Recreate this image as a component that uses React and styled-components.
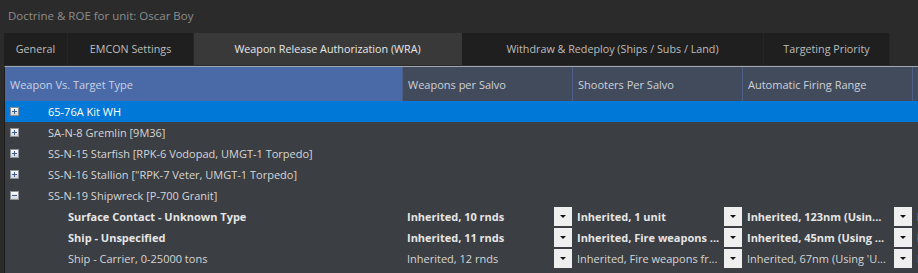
import React from 'react';
import styled, { createGlobalStyle } from 'styled-components';

const GlobalStyle = createGlobalStyle`
  body {
    margin: 0;
    background: #2b2b2b;
    font-family: "Open Sans", "Noto Sans", sans-serif;
    overflow: hidden;
  }
`;

const Window = styled.div`
  width: 918px;
  height: 273px;
  overflow: hidden;
  background: #2b2b2b;
`;

const TitleBar = styled.div`
  height: 33px;
  padding-left: 8px;
  line-height: 32px;
  font-size: 11.5px;
  color: #8d8d8d;
`;

const TabBar = styled.div`
  display: flex;
  height: 32px;
  margin-left: 4px;
`;

const Tab = styled.div`
  width: ${props => props.width}px;
  display: flex;
  align-items: center;
  justify-content: center;
  font-size: 10.75px;
  background: ${props => props.active ? '#393939' : '#1f1f1f'};
  color: ${props => props.active ? '#e8e8e8' : '#bdbdbd'};
  border-right: 1px solid ${props => props.active ? '#393939' : '#262626'};
  box-sizing: border-box;
`;

const Grid = styled.div`
  margin: 1px 0 0 4px;
  border-top: 1px solid #a3a8b0;
  border-left: 1px solid #1c1c1c;
  background: #3b3e43;
  height: 220px;
`;

const HeaderRow = styled.div`
  display: flex;
  height: 34px;
`;

const HeaderCell = styled.div`
  flex: 0 0 ${props => props.width}px;
  display: flex;
  align-items: center;
  padding-left: 5px;
  box-sizing: border-box;
  font-size: 11px;
  white-space: nowrap;
  overflow: hidden;
  color: ${props => props.sorted ? '#c9d2e4' : '#cdd2da'};
  background: ${props => props.sorted ? '#4a6aa7' : '#424b5c'};
  border-left: ${props => props.sorted ? 'none' : '1px solid #4d5f88'};
`;

const Row = styled.div`
  display: flex;
  height: 21px;
  align-items: center;
  background: ${props => props.selected ? '#0078d7' : 'transparent'};
`;

const NameCell = styled.div`
  flex: 0 0 397px;
  display: flex;
  align-items: center;
  height: 100%;
  font-size: 11px;
  font-weight: ${props => props.bold ? 700 : 400};
  color: ${props => props.selected ? '#ffffff' : props.bold ? '#e6e6e6' : '#d6d6d6'};
  white-space: nowrap;
`;

const ExpandSlot = styled.div`
  width: ${props => props.indent}px;
  flex: 0 0 auto;
  display: flex;
  align-items: center;
  padding-left: 5px;
  box-sizing: border-box;
`;

const Expander = styled.div`
  width: 9px;
  height: 9px;
  box-sizing: border-box;
  border: 1px solid #8e9196;
  background: linear-gradient(#fafafa, #d4d6da);
  position: relative;

  &::before, &::after {
    content: '';
    position: absolute;
    background: #3d5c96;
  }
  &::before {
    left: 1px;
    right: 1px;
    top: 3px;
    height: 1px;
  }
  &::after {
    display: ${props => props.open ? 'none' : 'block'};
    top: 1px;
    bottom: 1px;
    left: 3px;
    width: 1px;
  }
`;

const ValueCell = styled.div`
  flex: 0 0 170px;
  display: flex;
  align-items: center;
  height: 100%;
  box-sizing: border-box;
  padding-left: 5px;
  font-size: 11px;
  font-weight: ${props => props.bold ? 700 : 400};
  color: ${props => props.bold ? '#e6e6e6' : '#d6d6d6'};
  white-space: nowrap;
  overflow: hidden;
`;

const ValueText = styled.span`
  flex: 1;
  overflow: hidden;
`;

const DropButton = styled.div`
  flex: 0 0 18px;
  height: 19px;
  background: #efefef;
  display: flex;
  align-items: center;
  justify-content: center;

  &::after {
    content: '';
    border-left: 3px solid transparent;
    border-right: 3px solid transparent;
    border-top: 3px solid #111;
  }
`;

const tabs = [
  { label: 'General', width: 64 },
  { label: 'EMCON Settings', width: 126 },
  { label: 'Weapon Release Authorization (WRA)', width: 268, active: true },
  { label: 'Withdraw & Redeploy (Ships / Subs / Land)', width: 302 },
  { label: 'Targeting Priority', width: 126 },
];

const weapons = [
  { name: '65-76A Kit WH', selected: true },
  { name: 'SA-N-8 Gremlin [9M36]' },
  { name: 'SS-N-15 Starfish [RPK-6 Vodopad, UMGT-1 Torpedo]' },
  { name: 'SS-N-16 Stallion ["RPK-7 Veter, UMGT-1 Torpedo]' },
  { name: 'SS-N-19 Shipwreck [P-700 Granit]', open: true },
];

const targets = [
  { name: 'Surface Contact - Unknown Type', bold: true,
    values: ['Inherited, 10 rnds', 'Inherited, 1 unit', 'Inherited, 123nm (Usin...', 'Inherited'] },
  { name: 'Ship - Unspecified', bold: true,
    values: ['Inherited, 11 rnds', 'Inherited, Fire weapons ...', 'Inherited, 45nm (Using ...', 'Inherited'] },
  { name: 'Ship - Carrier, 0-25000 tons',
    values: ['Inherited, 12 rnds', 'Inherited, Fire weapons fr...', "Inherited, 67nm (Using 'U...", 'Inherited'] },
];

export default function App() {
  return (
    <Window>
      <GlobalStyle />
      <TitleBar>Doctrine &amp; ROE for unit: Oscar Boy</TitleBar>
      <TabBar>
        {tabs.map(t => (
          <Tab key={t.label} width={t.width} active={t.active}>{t.label}</Tab>
        ))}
      </TabBar>
      <Grid>
        <HeaderRow>
          <HeaderCell width={397} sorted>Weapon Vs. Target Type</HeaderCell>
          <HeaderCell width={170}>Weapons per Salvo</HeaderCell>
          <HeaderCell width={170}>Shooters Per Salvo</HeaderCell>
          <HeaderCell width={170}>Automatic Firing Range</HeaderCell>
          <HeaderCell width={170}>Self-Defence Range</HeaderCell>
        </HeaderRow>
        {weapons.map(w => (
          <Row key={w.name} selected={w.selected}>
            <NameCell selected={w.selected}>
              <ExpandSlot indent={43}><Expander open={w.open} /></ExpandSlot>
              {w.name}
            </NameCell>
          </Row>
        ))}
        {targets.map(t => (
          <Row key={t.name}>
            <NameCell bold={t.bold}>
              <ExpandSlot indent={63} />
              {t.name}
            </NameCell>
            {t.values.map((v, i) => (
              <ValueCell key={i} bold={t.bold}>
                <ValueText>{v}</ValueText>
                {i < 3 && <DropButton />}
              </ValueCell>
            ))}
          </Row>
        ))}
      </Grid>
    </Window>
  );
}
